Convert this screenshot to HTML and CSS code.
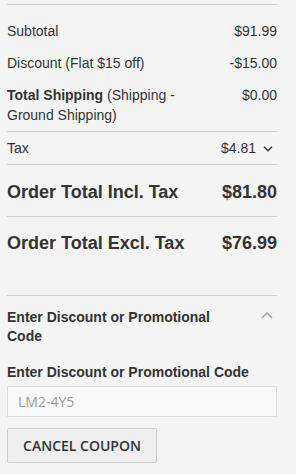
FILE: index.html
```html
<!DOCTYPE html>
<html>
<head>
<meta charset="utf-8">
<link rel="stylesheet" href="styles.css">
</head>
<body>
<div class="page">
  <div class="summary">
    <div class="row">
      <span class="label">Subtotal</span>
      <span class="value">$91.99</span>
    </div>
    <div class="row">
      <span class="label">Discount (Flat $15 off)</span>
      <span class="value">-$15.00</span>
    </div>
    <div class="row divided">
      <span class="label"><strong>Total Shipping</strong><span class="method"> (Shipping - Ground Shipping)</span></span>
      <span class="value">$0.00</span>
    </div>
    <div class="row divided">
      <span class="label">Tax</span>
      <span class="value">$4.81<svg class="chev-down" width="10" height="6" viewBox="0 0 10 6"><polyline points="1,0.8 5,4.8 9,0.8" fill="none" stroke="#333" stroke-width="1.4"/></svg></span>
    </div>
    <div class="row grand divided incl">
      <span class="label">Order Total Incl. Tax</span>
      <span class="value">$81.80</span>
    </div>
    <div class="row grand excl">
      <span class="label">Order Total Excl. Tax</span>
      <span class="value">$76.99</span>
    </div>
  </div>
  <div class="promo">
    <div class="promo-head">
      <span class="promo-title">Enter Discount or Promotional Code</span>
      <svg class="chev-up" width="12" height="7" viewBox="0 0 12 7"><polyline points="1,6 6,1 11,6" fill="none" stroke="#999" stroke-width="1.4"/></svg>
    </div>
    <label class="promo-label" for="code">Enter Discount or Promotional Code</label>
    <input id="code" class="promo-input" type="text" placeholder="LM2-4Y5">
    <button class="btn" type="button">CANCEL COUPON</button>
  </div>
</div>
</body>
</html>
```
FILE: styles.css
```css
html, body {
  margin: 0;
  padding: 0;
  background: #f4f4f4;
}
body {
  font-family: "Liberation Sans", Arial, sans-serif;
  font-size: 14px;
  color: #333;
}
.page {
  margin: 0 19px 0 7px;
  padding-top: 4px;
}
.summary {
  border-top: 1px solid #cfcfcf;
  padding-top: 10px;
}
.row {
  display: flex;
  justify-content: space-between;
  align-items: flex-start;
  padding: 6px 0;
  line-height: 20px;
}
.row .label {
  flex: 1;
  padding-right: 30px;
}
.row .value {
  white-space: nowrap;
  display: flex;
  align-items: center;
}
.divided {
  border-bottom: 1px solid #cfcfcf;
}
.chev-down {
  margin-left: 7px;
  margin-right: 4px;
  margin-top: 1px;
}
.grand {
  font-size: 18px;
  font-weight: bold;
  line-height: 24px;
}
.grand.incl {
  padding: 15px 0 12px;
}
.grand.excl {
  padding: 14px 0 0;
}
.promo {
  margin-top: 40px;
  border-top: 1px solid #cfcfcf;
}
.promo-head {
  display: flex;
  align-items: flex-start;
  padding: 12px 0 17px;
  font-weight: bold;
  line-height: 19px;
}
.promo-title {
  flex: 1;
  padding-right: 40px;
}
.chev-up {
  margin-top: 4px;
  margin-right: 4px;
}
.promo-label {
  display: block;
  font-weight: bold;
  line-height: 19px;
  margin-bottom: 4px;
}
.promo-input {
  display: block;
  box-sizing: border-box;
  width: 100%;
  height: 31px;
  margin: 0;
  padding: 0 10px;
  border: 1px solid #dcdcdc;
  background: #fafafa;
  font-family: "Open Sans", sans-serif;
  font-size: 14px;
  color: #333;
  outline: none;
}
.promo-input::placeholder {
  color: #9a9a9a;
}
.btn {
  display: block;
  box-sizing: border-box;
  margin-top: 11px;
  width: 150px;
  height: 35px;
  padding: 0;
  border: 1px solid #cdcdcd;
  border-radius: 2px;
  background: #eeeeee;
  box-shadow: 0 1px 1px rgba(0,0,0,0.06);
  font-family: "Open Sans", sans-serif;
  font-size: 14px;
  font-weight: 600;
  color: #333;
}
```
